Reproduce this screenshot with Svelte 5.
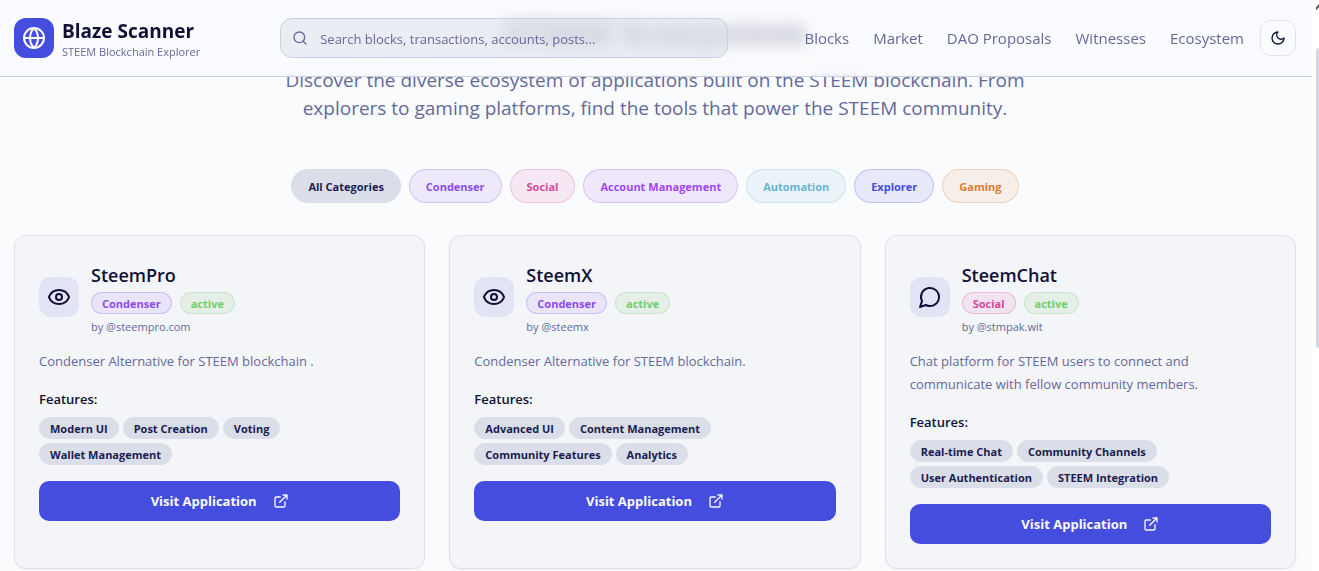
<script>
  const nav = ['Blocks', 'Market', 'DAO Proposals', 'Witnesses', 'Ecosystem'];
  const categories = [
    { name: 'All Categories', tone: 'all' },
    { name: 'Condenser', tone: 'violet' },
    { name: 'Social', tone: 'pink' },
    { name: 'Account Management', tone: 'purple' },
    { name: 'Automation', tone: 'cyan' },
    { name: 'Explorer', tone: 'indigo' },
    { name: 'Gaming', tone: 'orange' }
  ];
  const apps = [
    {
      name: 'SteemPro', category: 'Condenser', tone: 'violet', icon: 'eye', author: '@steempro.com',
      text: 'Condenser Alternative for STEEM blockchain .',
      features: ['Modern UI', 'Post Creation', 'Voting', 'Wallet Management']
    },
    {
      name: 'SteemX', category: 'Condenser', tone: 'violet', icon: 'eye', author: '@steemx',
      text: 'Condenser Alternative for STEEM blockchain.',
      features: ['Advanced UI', 'Content Management', 'Community Features', 'Analytics']
    },
    {
      name: 'SteemChat', category: 'Social', tone: 'pink', icon: 'chat', author: '@stmpak.wit',
      text: 'Chat platform for STEEM users to connect and communicate with fellow community members.',
      features: ['Real-time Chat', 'Community Channels', 'User Authentication', 'STEEM Integration']
    }
  ];
</script>

<div class="shell">
  <div class="page">
    <header>
      <a class="brand" href="#home">
        <span class="logo">
          <svg width="24" height="24" viewBox="0 0 24 24"><circle cx="12" cy="12" r="10" /><path d="M12 2a14.5 14.5 0 0 0 0 20 14.5 14.5 0 0 0 0-20M2 12h20" /></svg>
        </span>
        <span class="names">
          <strong>Blaze Scanner</strong>
          <small>STEEM Blockchain Explorer</small>
        </span>
      </a>
      <label class="search">
        <svg width="16" height="16" viewBox="0 0 24 24"><circle cx="11" cy="11" r="8" /><path d="m21 21-4.3-4.3" /></svg>
        <input type="text" aria-label="Search" placeholder="Search blocks, transactions, accounts, posts..." />
      </label>
      <div class="right">
        <nav>
          {#each nav as item}<a href="#{item}">{item}</a>{/each}
        </nav>
        <button class="theme" aria-label="Toggle theme">
          <svg width="16" height="16" viewBox="0 0 24 24"><path d="M12 3a6 6 0 0 0 9 9 9 9 0 1 1-9-9Z" /></svg>
        </button>
      </div>
    </header>

    <main>
      <section class="hero">
        <h1>STEEM Ecosystem</h1>
        <p>Discover the diverse ecosystem of applications built on the STEEM blockchain. From explorers to gaming platforms, find the tools that power the STEEM community.</p>
      </section>

      <div class="filters">
        {#each categories as c}<button class="filter {c.tone}">{c.name}</button>{/each}
      </div>

      <div class="cards">
        {#each apps as app}
          <article>
            <div class="head">
              <span class="icon">
                {#if app.icon === 'eye'}
                  <svg width="24" height="24" viewBox="0 0 24 24"><path d="M2.06 12.35a1 1 0 0 1 0-.7 10.75 10.75 0 0 1 19.88 0 1 1 0 0 1 0 .7 10.75 10.75 0 0 1-19.88 0" /><circle cx="12" cy="12" r="3" /></svg>
                {:else}
                  <svg width="24" height="24" viewBox="0 0 24 24"><path d="M7.9 20A9 9 0 1 0 4 16.1L2 22Z" /></svg>
                {/if}
              </span>
              <div class="info">
                <h2>{app.name}</h2>
                <div class="badges">
                  <span class="badge {app.tone}">{app.category}</span>
                  <span class="badge green">active</span>
                </div>
                <span class="author">by {app.author}</span>
              </div>
            </div>
            <p>{app.text}</p>
            <h3>Features:</h3>
            <div class="tags">
              {#each app.features as f}<span class="badge tag">{f}</span>{/each}
            </div>
            <a class="visit" href="#{app.name}">
              Visit Application
              <svg width="16" height="16" viewBox="0 0 24 24"><path d="M15 3h6v6M10 14 21 3M18 13v6a2 2 0 0 1-2 2H5a2 2 0 0 1-2-2V8a2 2 0 0 1 2-2h6" /></svg>
            </a>
          </article>
        {/each}
      </div>
    </main>
  </div>
  <div class="rail" aria-hidden="true">
    <svg width="3" height="48" viewBox="0 0 3 48"><path d="M0 9 3 5.5" stroke="#505050" stroke-width="2" /></svg>
    <div class="thumb"></div>
  </div>
</div>

<style>
  :global(body) {
    margin: 0;
    background: #fff;
    font-family: 'Segoe UI', 'Open Sans', 'Noto Sans', sans-serif;
  }
  * { box-sizing: border-box; }
  svg { fill: none; stroke: currentColor; stroke-width: 2; stroke-linecap: round; stroke-linejoin: round; flex: none; }
  a { text-decoration: none; color: inherit; }
  button { font-family: inherit; margin: 0; cursor: pointer; }
  h1, h2, h3, p { margin: 0; }

  .shell { display: flex; color: #0e1036; }
  .page { flex: 1; min-width: 0; min-height: 100vh; background: #f9fbfd; border-top-left-radius: 8px; }

  header {
    position: sticky;
    top: 0;
    z-index: 2;
    height: 77px;
    padding: 0 16px 0 14px;
    display: flex;
    align-items: center;
    justify-content: space-between;
    gap: 16px;
    border-bottom: 1px solid #c8cfe0;
    background: rgba(249, 251, 253, 0.75);
    backdrop-filter: blur(8px);
  }
  .brand { display: flex; align-items: center; gap: 8px; min-width: 190px; }
  .logo { width: 40px; height: 40px; border-radius: 12px; background: #454ddf; color: #f8fafc; display: grid; place-items: center; }
  .names { display: flex; flex-direction: column; padding-top: 2px; white-space: nowrap; }
  .names strong { font-size: 19px; line-height: 26px; font-weight: 700; }
  .names small { font-size: 11px; line-height: 16px; color: #64699a; }
  .search {
    flex: 0 1 448px;
    height: 40px;
    padding: 0 11px;
    display: flex;
    align-items: center;
    gap: 12px;
    border: 1px solid #c8cfe0;
    border-radius: 12px;
    background: rgba(217, 221, 231, 0.5);
    color: #64699a;
  }
  .search input { flex: 1; min-width: 0; border: 0; padding: 2px 0 0; background: none; outline: 0; font: 13px/20px 'Segoe UI', 'Open Sans', sans-serif; color: #0e1036; }
  .search input::placeholder { color: #64699a; opacity: 1; }
  .right { display: flex; align-items: center; gap: 16px; }
  nav { display: flex; gap: 24px; font-size: 15px; line-height: 24px; color: #64699a; white-space: nowrap; }
  .theme { width: 36px; height: 36px; padding: 0; border: 1px solid #e3e5ee; border-radius: 10px; background: none; color: #0e1036; display: grid; place-items: center; }

  main { margin-top: -77px; padding: 2px 16px 0 14px; }
  .hero { text-align: center; }
  h1 { font-size: 34px; line-height: 60px; font-weight: 800; }
  .hero p { max-width: 768px; margin: 4px auto 0; font-size: 19px; line-height: 28px; color: #64699a; }

  .filters { display: flex; flex-wrap: wrap; justify-content: center; gap: 8px; margin-top: 47px; }
  .filter { height: 34px; padding: 2px 16px 0; border: 1px solid; border-radius: 17px; font-size: 11px; line-height: 16px; font-weight: 700; }
  .all { color: #1c1c50; background: #dadee8; border-color: #dadee8; }
  .violet { color: #8b4bf0; background: rgba(139, 75, 240, 0.1); border-color: rgba(139, 75, 240, 0.25); }
  .pink { color: #d4489a; background: rgba(212, 72, 154, 0.1); border-color: rgba(212, 72, 154, 0.25); }
  .purple { color: #a144f0; background: rgba(161, 68, 240, 0.1); border-color: rgba(161, 68, 240, 0.25); }
  .cyan { color: #6bb4d3; background: rgba(107, 180, 200, 0.1); border-color: rgba(107, 180, 211, 0.25); }
  .indigo { color: #454ddf; background: rgba(69, 77, 223, 0.1); border-color: rgba(69, 77, 223, 0.25); }
  .orange { color: #de7c32; background: rgba(222, 124, 50, 0.1); border-color: rgba(222, 124, 50, 0.25); }
  .green { color: #72cd6c; background: rgba(100, 190, 90, 0.1); border-color: rgba(114, 205, 108, 0.25); }
  .tag { color: #1c1c50; background: #dadee8; border-color: #dadee8; }

  .cards { display: grid; grid-template-columns: repeat(3, minmax(0, 1fr)); gap: 24px; margin-top: 32px; }
  article { padding: 24px; border: 1px solid #dfe1ea; border-radius: 12px; background: #f4f5f9; box-shadow: 0 1px 2px rgba(0, 0, 0, 0.05); }
  .head { display: flex; align-items: center; gap: 12px; }
  .icon { width: 40px; height: 40px; border-radius: 12px; background: #e1e4f5; display: grid; place-items: center; }
  .info { display: flex; flex-direction: column; gap: 4px; }
  h2 { padding-top: 2px; font-size: 18px; line-height: 26px; font-weight: 600; }
  .badges { display: flex; gap: 8px; }
  .badge { height: 22px; padding: 3px 10px 1px; border-width: 1px; border-style: solid; border-radius: 11px; font-size: 11px; line-height: 16px; font-weight: 700; white-space: nowrap; }
  .author { padding-top: 2px; font-size: 11px; line-height: 14px; color: #64699a; }
  article p { margin-top: 16px; font-size: 13px; line-height: 23px; color: #64699a; }
  h3 { margin-top: 16px; font-size: 13px; line-height: 20px; font-weight: 600; }
  .tags { display: flex; flex-wrap: wrap; gap: 4px; margin-top: 8px; }
  .visit { display: flex; align-items: center; justify-content: center; gap: 16px; height: 40px; margin-top: 16px; border-radius: 10px; background: #454ddf; color: #f8fafc; font-size: 13px; line-height: 20px; font-weight: 700; }

  .rail { width: 7px; flex: none; display: flex; flex-direction: column; align-items: flex-end; }
  .thumb { width: 3px; height: 300px; border-radius: 3px 0 0 3px; background: #d1d8e3; }
</style>
